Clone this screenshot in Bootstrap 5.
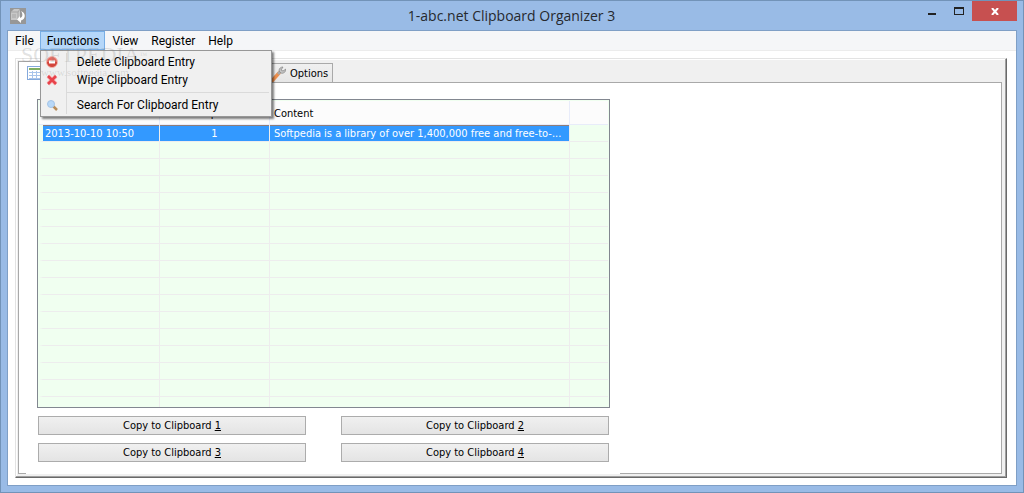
<!DOCTYPE html>
<html lang="en">
<head>
<meta charset="utf-8">
<meta name="viewport" content="width=device-width, initial-scale=1">
<title>1-abc.net Clipboard Organizer 3</title>
<link rel="stylesheet" href="https://cdn.jsdelivr.net/npm/bootstrap@5.3.0/dist/css/bootstrap.min.css">
<style>
  :root { --list: "DejaVu Sans Condensed", "DejaVu Sans", sans-serif; }
  body { font: 12px/18px Roboto, "Open Sans", sans-serif; color: #000; background: #99bbe6; }
  button { color: inherit; font: inherit; border: 0; background: none; padding: 0; }
  .window { border: 1px solid #7293b8; background: #99bbe6; padding: 0 6px 6px; overflow: hidden; }
  .titlebar { height: 29px; }
  .titlebar h1 { font: 14px/20px "Open Sans", "Noto Sans", sans-serif; color: #26292e; margin: 0 20px 0 0; }
  .titlebar svg, .menu svg, .tab-row svg { display: block; }
  .app-icon { margin-left: 3px; }
  .win-buttons { top: 0; right: 6px; }
  .win-buttons button { width: 27px; height: 20px; display: flex; align-items: center; justify-content: center; }
  .win-buttons .close-window { width: 45px; background: #c75050; }
  .client { border: 1px solid #7f9fc6; background: #fff; }
  .menubar { height: 20px; background: #f5f6f8; border-bottom: 1px solid #ececec; }
  .menubar .top-item { height: 19px; padding: 1px 6px 0 7px; line-height: 19px; display: block; }
  .menubar .open-item { background: #b5d7f9; box-shadow: inset 0 0 0 1px #78aee5; }
  .menu { top: 100%; left: 0; width: 232px; padding: 2px; margin: 0; font-size: 12px; border: 1px solid #979797; border-radius: 0; background: #f0f0f0; box-shadow: 2px 2px 2px #00000080; color: #000; }
  .menu button { display: flex; align-items: center; width: 100%; height: 18px; white-space: nowrap; }
  .menu .glyph { width: 24px; height: 18px; border-right: 1px solid #dadada; display: flex; align-items: center; padding-left: 1px; flex: none; }
  .menu .caption { padding-left: 10px; }
  .menu .rule { height: 7px; border-left: 1px solid #dadada; margin-left: 23px; padding-top: 3px; }
  .menu .rule::before { content: ""; display: block; border-top: 1px solid #dadada; }
  .frame { margin: 7px 9px 7px 7px; background: #f0f0f0; border: 1px solid; border-color: #e3e3e3 #696969 #696969 #e3e3e3; box-shadow: inset -1px -1px #a0a0a0, inset 1px 1px #fff; padding: 2px 4px 3px 2px; }
  .tab-row { height: 22px; font-family: var(--list); font-size: 11px; margin-bottom: -1px; }
  .tab-main { width: 249px; height: 22px; background: #fff; border: 1px solid #a9a9a9; border-bottom: 0; z-index: 1; padding: 1px 8px; }
  .tab-options { height: 20px; border: 1px solid #a9a9a9; background: linear-gradient(#f0f0f0, #e6e6e6); padding: 1px 4px 0 2px; gap: 4px; line-height: 19px; }
  .page { border: 1px solid #a9a9a9; background: #fff; }
  .workspace { width: 100%; max-width: 594px; margin: 0 0 -1px 7px; padding: 16px 10px 1px 11px; background: #fff; font-family: var(--list); font-size: 11px; }
  .list-box { border: 1px solid #828790; background: #f0fff0; overflow: hidden; padding: 1px; flex: 1 1 0; min-height: 0; }
  .entries { table-layout: fixed; width: 100%; border-collapse: separate; border-spacing: 0; }
  .entries .col-date { width: 121px; }
  .entries .col-number { width: 110px; }
  .entries .col-content { width: 300px; }
  .entries th { height: 24px; background: #fcfcfc; font-weight: 400; border-right: 1px solid #e8ecfa; border-bottom: 1px solid #e8ecfa; padding: 2px 4px 0; line-height: 16px; }
  .entries td { height: 17px; padding: 2px 4px 0; line-height: 14px; border-right: 1px solid #ededed; border-bottom: 1px solid #ededed; white-space: nowrap; }
  .entries tr > :last-child { border-right: 0; }
  .entries td:first-child { border-left: 4px solid #f0fff0; padding-left: 2px; }
  .entries .chosen td:not(:last-child) { background: linear-gradient(#3399ff, #3399ff) padding-box; color: #fff; box-shadow: inset 0 1px #8f7c78; }
  .copy-grid { display: grid; grid-template-columns: 1fr 1fr; gap: 8px 35px; padding: 8px 1px 11px; }
  .copy-grid button { height: 19px; border: 1px solid #acacac; background: linear-gradient(#f0f0f0, #e4e4e4); line-height: 18px; }
  .watermark { left: 20px; top: 44px; pointer-events: none; z-index: 1100; color: #80808038; font: 22px/20px "Liberation Serif", serif; }
  .watermark small { display: block; font: 11px/14px "Liberation Serif", serif; padding-left: 20px; }
  .watermark sup { font-size: 8px; }
</style>
</head>
<body>
<div class="window position-relative d-flex flex-column vh-100">
  <header class="titlebar d-flex align-items-center flex-shrink-0">
    <svg class="app-icon" width="16" height="16" viewBox="0 0 16 16"><rect width="16" height="16" fill="#979797"/><path d="M1 4l3-3h6v8l-2 3H1z" fill="#c8c8c8"/><path d="M1 4h7v8M8 4l2-3M3 6v4M5 6v4" stroke="#a6a6a6" fill="none"/><path d="M11 3c5 2 5 8 0 9.500V15l-4-3.500L10 8v2c3-1 3-4 1-7z" fill="#fff"/></svg>
    <h1 class="flex-fill text-center">1-abc.net Clipboard Organizer 3</h1>
    <div class="win-buttons position-absolute d-flex">
      <button aria-label="Minimize"><svg width="8" height="8"><path d="M0 6h8v2H0z" fill="#222"/></svg></button>
      <button aria-label="Maximize"><svg width="10" height="8"><path d="M0 0h10v8H0zM1 2v5h8V2z" fill="#222" fill-rule="evenodd"/></svg></button>
      <button class="close-window" aria-label="Close"><svg width="8" height="7"><path d="M1 0l6 7M7 0L1 7" stroke="#fff" stroke-width="2"/></svg></button>
    </div>
  </header>
  <main class="client flex-fill d-flex flex-column">
    <nav class="menubar d-flex flex-shrink-0">
      <button class="top-item">File</button>
      <div class="dropdown">
        <button class="top-item open-item" aria-expanded="true">Functions</button>
        <div class="menu dropdown-menu show">
          <button><span class="glyph"><svg width="16" height="16"><circle cx="8" cy="8" r="5.500" fill="#e36a60" stroke="#f2b5ae"/><path d="M3 8a5 5 0 0 0 10 0z" fill="#d2453c"/><path d="M5 6.500h6v3H5z" fill="#fff"/></svg></span><span class="caption">Delete Clipboard Entry</span></button>
          <button><span class="glyph"><svg width="16" height="16"><path d="M4 4l8 8M12 4l-8 8" stroke="#f7b5b5" stroke-width="4"/><path d="M4 4l8 8M12 4l-8 8" stroke="#e8434b" stroke-width="2.500"/></svg></span><span class="caption">Wipe Clipboard Entry</span></button>
          <div class="rule"></div>
          <button><span class="glyph"><svg width="16" height="16"><path d="M9 9l4 4" stroke="#b88c58" stroke-width="2.500"/><circle cx="7" cy="7" r="3.500" fill="#b8d8f8" stroke="#a4c4e8"/></svg></span><span class="caption">Search For Clipboard Entry</span></button>
        </div>
      </div>
      <button class="top-item">View</button>
      <button class="top-item">Register</button>
      <button class="top-item">Help</button>
    </nav>
    <section class="frame flex-fill d-flex flex-column">
      <div class="tab-row d-flex align-items-end">
        <button class="tab-main" aria-label="Clipboard entries"><svg width="16" height="16"><rect x=".5" y="1.500" width="15" height="13" fill="#fff" stroke="#84a9dc"/><path d="M2 3h12v2H2z" fill="#7fae62"/><path d="M2 7.500h12M2 10.500h12M2 13.500h12M5.500 6v8M9.500 6v8" stroke="#a8c4ea"/></svg></button>
        <button class="tab-options d-flex align-items-center"><svg width="16" height="16"><path d="M2 15L9 7" stroke="#ec8f4e" stroke-width="3.500" stroke-linecap="round"/><path d="M8 8l3-3" stroke="#a9a9a9" stroke-width="3"/><path d="M9 5c0-3 2-4 4-4l-2 3 2 1 3-2c0 3-3 5-5 4z" fill="#c4c4c4" stroke="#8c8c8c" stroke-width=".8"/></svg>Options</button>
      </div>
      <div class="page flex-fill d-flex flex-column">
        <div class="workspace flex-fill d-flex flex-column">
          <div class="list-box">
            <table class="entries">
              <colgroup><col class="col-date"><col class="col-number"><col class="col-content"><col></colgroup>
              <thead><tr><th>Date</th><th class="text-center">Copies</th><th>Content</th><th></th></tr></thead>
              <tbody>
                <tr class="chosen"><td>2013-10-10 10:50</td><td class="text-center">1</td><td>Softpedia is a library of over 1,400,000 free and free-to-...</td><td></td></tr>
                <tr><td></td><td></td><td></td><td></td></tr>
                <tr><td></td><td></td><td></td><td></td></tr>
                <tr><td></td><td></td><td></td><td></td></tr>
                <tr><td></td><td></td><td></td><td></td></tr>
                <tr><td></td><td></td><td></td><td></td></tr>
                <tr><td></td><td></td><td></td><td></td></tr>
                <tr><td></td><td></td><td></td><td></td></tr>
                <tr><td></td><td></td><td></td><td></td></tr>
                <tr><td></td><td></td><td></td><td></td></tr>
                <tr><td></td><td></td><td></td><td></td></tr>
                <tr><td></td><td></td><td></td><td></td></tr>
                <tr><td></td><td></td><td></td><td></td></tr>
                <tr><td></td><td></td><td></td><td></td></tr>
                <tr><td></td><td></td><td></td><td></td></tr>
                <tr><td></td><td></td><td></td><td></td></tr>
                <tr><td></td><td></td><td></td><td></td></tr>
              </tbody>
            </table>
          </div>
          <div class="copy-grid">
            <button>Copy to Clipboard <u>1</u></button>
            <button>Copy to Clipboard <u>2</u></button>
            <button>Copy to Clipboard <u>3</u></button>
            <button>Copy to Clipboard <u>4</u></button>
          </div>
        </div>
      </div>
    </section>
  </main>
  <div class="watermark position-absolute">SOFTPEDIA<sup>™</sup><small>www.softpedia.com</small></div>
</div>
<script src="https://cdn.jsdelivr.net/npm/bootstrap@5.3.0/dist/js/bootstrap.bundle.min.js"></script>
</body>
</html>
